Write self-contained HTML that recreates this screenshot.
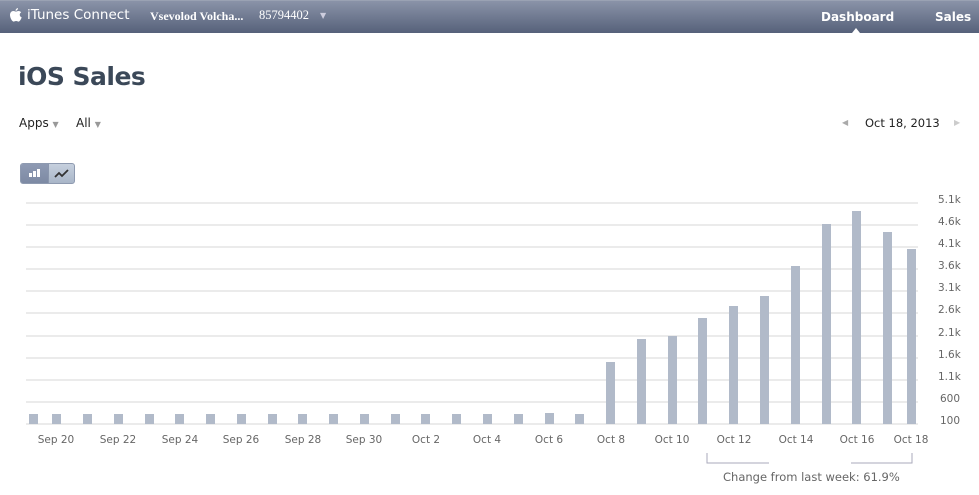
<!DOCTYPE html>
<html><head><meta charset="utf-8"><style>
body{margin:0;width:979px;height:495px;background:#fff;font-family:Tahoma,"DejaVu Sans",sans-serif;overflow:hidden;position:relative}
.hdr{position:absolute;left:0;top:0;width:979px;height:33px;background:linear-gradient(#8a93a8,#56617a);border-top:1px solid #9aa2b3;box-sizing:border-box}
.t{position:absolute;color:#fff;white-space:nowrap}
</style></head><body>
<div class="hdr">
<svg style="position:absolute;left:10px;top:7px" width="12" height="14" viewBox="0 0 12 14"><path d="M8 0c0 1.5-1 2.7-2.4 2.8C5.5 1.4 6.6.2 8 0zM6 3.6c.8 0 1.6-.6 2.6-.6 1 0 2 .6 2.6 1.4-2.2 1.2-1.8 4.2.5 5-.6 1.6-1.8 4.2-3.2 4.2-.9 0-1.2-.6-2.4-.6s-1.6.6-2.5.6C2 13.6 0 9.6 0 7 0 4.6 1.6 3 3.3 3c1 0 1.9.6 2.7.6z" fill="#fff"/></svg>
<div class="t" style="left:27px;top:6px;font-family:'DejaVu Sans',sans-serif;font-size:13.5px">iTunes Connect</div>
<div class="t" style="left:150px;top:8px;font-size:12px;font-weight:bold;font-family:'Liberation Serif',serif">Vsevolod Volcha...</div>
<div class="t" style="left:259px;top:7px;font-size:12.5px;font-family:'Liberation Serif',serif">85794402</div>
<div class="t" style="left:320px;top:10px;font-size:8px;color:#ccd">&#9660;</div>
<div class="t" style="left:821px;top:9px;font-size:12px;font-weight:bold">Dashboard</div>
<div class="t" style="left:935px;top:9px;font-size:12px;font-weight:bold">Sales</div>
<div style="position:absolute;left:852px;top:27px;width:0;height:0;border-left:4px solid transparent;border-right:4px solid transparent;border-bottom:5px solid #fff"></div>
</div>
<div style="position:absolute;left:18px;top:62px;font-size:25px;font-weight:bold;color:#3b4858;font-family:Verdana,'DejaVu Sans',sans-serif;letter-spacing:-0.5px">iOS Sales</div>
<div style="position:absolute;left:19px;top:116px;font-size:12px;color:#222">Apps <span style="color:#999;font-size:8px">&#9660;</span></div>
<div style="position:absolute;left:76px;top:116px;font-size:12px;color:#222">All <span style="color:#999;font-size:8px">&#9660;</span></div>
<div style="position:absolute;left:842px;top:118px;font-size:8px;color:#aaa">&#9664;</div>
<div style="position:absolute;left:865px;top:116px;font-size:11.5px;color:#222">Oct 18, 2013</div>
<div style="position:absolute;left:954px;top:118px;font-size:8px;color:#ccc">&#9654;</div>
<div style="position:absolute;left:20px;top:163px;width:55px;height:21px;border:1px solid #8e9ab0;border-radius:3px;background:linear-gradient(#c6d0de,#a9b6c8);box-sizing:border-box;overflow:hidden">
<div style="position:absolute;left:0;top:0;width:27px;height:21px;background:linear-gradient(#8e9ab3,#7b88a2);border-right:1px solid #8a96ad"></div>
<svg style="position:absolute;left:0;top:0" width="55" height="21"><rect x="8" y="9" width="3" height="4" fill="#fff"/><rect x="12" y="7" width="3" height="6" fill="#fff"/><rect x="16" y="5" width="3" height="8" fill="#fff"/><path d="M34 13l4-4 3 3 6-6" stroke="#333" stroke-width="1.8" fill="none"/></svg>
</div>
<svg style="position:absolute;left:0;top:190px" width="979" height="305" font-family="Tahoma,'DejaVu Sans',sans-serif" font-size="10.5" fill="#666">
<g stroke="#ebebeb" stroke-width="2">
<line x1="26" x2="918" y1="13" y2="13"/><line x1="26" x2="918" y1="35" y2="35"/><line x1="26" x2="918" y1="57" y2="57"/><line x1="26" x2="918" y1="79" y2="79"/><line x1="26" x2="918" y1="101" y2="101"/><line x1="26" x2="918" y1="123" y2="123"/><line x1="26" x2="918" y1="146" y2="146"/><line x1="26" x2="918" y1="168" y2="168"/><line x1="26" x2="918" y1="190" y2="190"/><line x1="26" x2="918" y1="212" y2="212"/><line x1="26" x2="918" y1="234" y2="234"/>
</g>
<g fill="#b1bac9">
<rect x="29" y="224" width="9" height="10"/><rect x="52" y="224" width="9" height="10"/>
<rect x="83" y="224" width="9" height="10"/><rect x="114" y="224" width="9" height="10"/><rect x="145" y="224" width="9" height="10"/><rect x="175" y="224" width="9" height="10"/><rect x="206" y="224" width="9" height="10"/><rect x="237" y="224" width="9" height="10"/><rect x="268" y="224" width="9" height="10"/><rect x="298" y="224" width="9" height="10"/><rect x="329" y="224" width="9" height="10"/><rect x="360" y="224" width="9" height="10"/><rect x="391" y="224" width="9" height="10"/><rect x="421" y="224" width="9" height="10"/><rect x="452" y="224" width="9" height="10"/><rect x="483" y="224" width="9" height="10"/><rect x="514" y="224" width="9" height="10"/><rect x="545" y="223" width="9" height="11"/><rect x="575" y="224" width="9" height="10"/>
<rect x="606" y="172" width="9" height="62"/><rect x="637" y="149" width="9" height="85"/><rect x="668" y="146" width="9" height="88"/><rect x="698" y="128" width="9" height="106"/><rect x="729" y="116" width="9" height="118"/><rect x="760" y="106" width="9" height="128"/><rect x="791" y="76" width="9" height="158"/><rect x="822" y="34" width="9" height="200"/><rect x="852" y="21" width="9" height="213"/><rect x="883" y="42" width="9" height="192"/><rect x="907" y="59" width="9" height="175"/>
</g>
<g text-anchor="start"><text x="938" y="13">5.1k</text><text x="938" y="35">4.6k</text><text x="938" y="57">4.1k</text><text x="938" y="79">3.6k</text><text x="938" y="101">3.1k</text><text x="938" y="123">2.6k</text><text x="938" y="146">2.1k</text><text x="938" y="168">1.6k</text><text x="938" y="190">1.1k</text><text x="940" y="212">600</text><text x="940" y="234">100</text></g>
<g text-anchor="middle"><text x="56" y="253">Sep 20</text><text x="118" y="253">Sep 22</text><text x="180" y="253">Sep 24</text><text x="241" y="253">Sep 26</text><text x="303" y="253">Sep 28</text><text x="364" y="253">Sep 30</text><text x="426" y="253">Oct 2</text><text x="487" y="253">Oct 4</text><text x="549" y="253">Oct 6</text><text x="611" y="253">Oct 8</text><text x="672" y="253">Oct 10</text><text x="734" y="253">Oct 12</text><text x="796" y="253">Oct 14</text><text x="857" y="253">Oct 16</text><text x="911" y="253">Oct 18</text></g>
<path d="M707 263v10h62M851 273h61v-10" stroke="#aab" fill="none"/>
<text x="723" y="291" font-size="11.5">Change from last week: 61.9%</text>
</svg>
</body></html>
